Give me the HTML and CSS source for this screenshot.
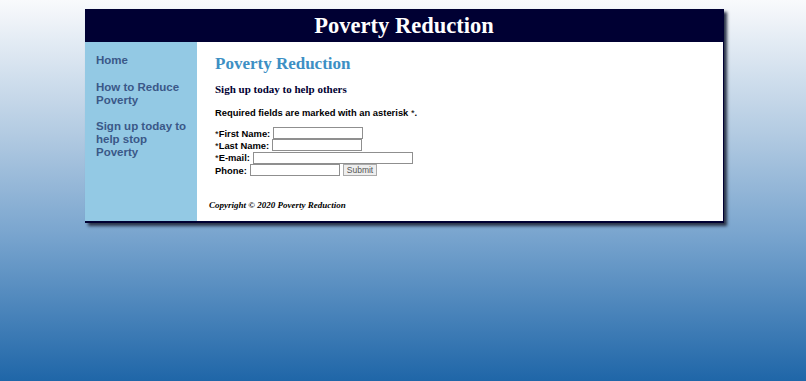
FILE: index.html
```html
<!DOCTYPE html>
<html lang="en">
<head>
    <meta charset="UTF-8">
    <meta name="viewport" content="width=device-width, initial-scale=1.0">
    <title>Poverty Reduction</title>
    <link rel="stylesheet" href="styles.css">
</head>
<body>
    <div class="wrapper">
        <header class="banner">
            <h1>Poverty Reduction</h1>
        </header>
        <div class="columns">
            <nav class="sidebar">
                <ul>
                    <li><a href="#">Home</a></li>
                    <li><a href="#">How to Reduce Poverty</a></li>
                    <li><a href="#">Sign up today to help stop Poverty</a></li>
                </ul>
            </nav>
            <main class="content">
                <section class="signup">
                    <h2>Poverty Reduction</h2>
                    <h3>Sigh up today to help others</h3>
                    <p class="note">Required fields are marked with an asterisk <span class="req">*</span>.</p>
                    <form class="signup-form">
                        <div class="row">
                            <label for="first"><span class="req">*</span>First Name:</label>
                            <input type="text" id="first" class="short">
                        </div>
                        <div class="row">
                            <label for="last"><span class="req">*</span>Last Name:</label>
                            <input type="text" id="last" class="short">
                        </div>
                        <div class="row">
                            <label for="email"><span class="req">*</span>E-mail:</label>
                            <input type="text" id="email" class="long">
                        </div>
                        <div class="row">
                            <label for="phone">Phone:</label>
                            <input type="text" id="phone" class="short">
                            <button type="submit">Submit</button>
                        </div>
                    </form>
                </section>
                <footer class="copyright">
                    Copyright &copy; 2020 Poverty Reduction
                </footer>
            </main>
        </div>
    </div>
</body>
</html>
```

FILE: styles.css
```css
* {
    box-sizing: border-box;
    margin: 0;
    padding: 0;
}

html,
body {
    height: 100%;
}

body {
    background: linear-gradient(#f9fafc 0%, #b3cbe2 35%, #78a4ce 62%, #1f66a8 100%);
    font-family: Arial, "Liberation Sans", sans-serif;
    padding-top: 9px;
}

.wrapper {
    width: 639px;
    margin: 0 auto 0 85px;
    border-right: 1px solid #000033;
    border-bottom: 2px solid #000033;
    box-shadow: 3px 3px 3px #2b3348;
}

.banner {
    height: 33px;
    background-color: #000033;
    color: #ffffff;
    text-align: center;
}

.banner h1 {
    font-family: Georgia, "Liberation Serif", serif;
    font-size: 22.5px;
    font-weight: bold;
    line-height: 33px;
}

.columns {
    display: flex;
}

.sidebar {
    width: 112px;
    background-color: #93c9e4;
    padding: 12px 8px 0 11px;
}

.sidebar ul {
    list-style: none;
}

.sidebar li {
    margin-bottom: 13.5px;
    font-size: 11.5px;
    font-weight: bold;
    line-height: 13px;
}

.sidebar a {
    color: #3a5888;
    text-decoration: none;
}

.content {
    flex: 1;
    background-color: #ffffff;
    padding-bottom: 10px;
}

.signup {
    padding: 11px 0 0 18px;
}

.signup h2 {
    font-family: Georgia, "Liberation Serif", serif;
    font-size: 17px;
    line-height: 22px;
    color: #3d8fc4;
}

.signup h3 {
    margin-top: 7px;
    font-family: Georgia, "Liberation Serif", serif;
    font-size: 11px;
    line-height: 14px;
    color: #000033;
}

.note {
    margin-top: 10px;
    font-size: 9.4px;
    font-weight: bold;
    line-height: 13px;
}

.req {
    font-weight: normal;
}

.signup-form {
    margin-top: 8px;
}

.row {
    display: flex;
    align-items: center;
    gap: 3px;
    height: 12.3px;
    font-size: 9.4px;
    font-weight: bold;
}

.row input {
    height: 12px;
    border: 1px solid #8f8f8f;
    font-size: 9px;
}

.row input.short {
    width: 90px;
}

.row input.long {
    width: 160px;
}

.row button {
    height: 12px;
    padding: 0 3px;
    font-family: Arial, "Liberation Sans", sans-serif;
    font-size: 8.5px;
    color: #555555;
    background-color: #eeeeee;
    border: 1px solid #aaaaaa;
}

.copyright {
    margin-top: 24px;
    padding-left: 12px;
    font-family: Georgia, "Liberation Serif", serif;
    font-size: 9px;
    font-style: italic;
    font-weight: bold;
    line-height: 11px;
}
```
